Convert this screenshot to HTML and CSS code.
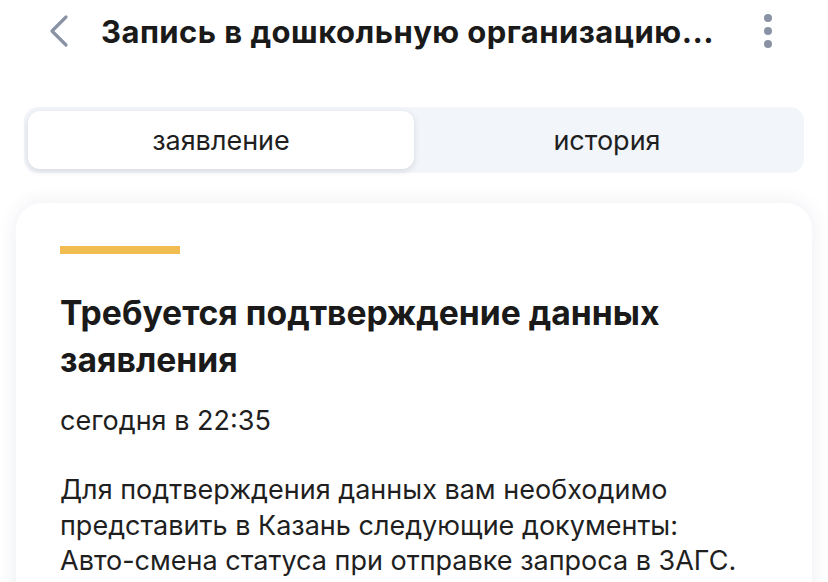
FILE: index.html
```html
<!DOCTYPE html>
<html lang="ru">
<head>
    <meta charset="UTF-8">
    <meta name="viewport" content="width=device-width, initial-scale=1.0">
    <link rel="stylesheet" href="styles.css">
    <title>Запись в дошкольную организацию</title>
</head>
<body>
    <header class="topbar">
        <button class="back" aria-label="Назад">
            <svg width="26" height="34" viewBox="0 0 26 34"><path d="M20 3 L6 17 L20 31" fill="none" stroke="#8a93a6" stroke-width="3.2" stroke-linecap="round" stroke-linejoin="round"/></svg>
        </button>
        <h1 class="title">Запись в дошкольную организацию...</h1>
        <button class="more" aria-label="Меню">
            <span></span><span></span><span></span>
        </button>
    </header>

    <div class="tabs">
        <div class="tab active">заявление</div>
        <div class="tab">история</div>
    </div>

    <section class="card">
        <div class="mark"></div>
        <h2>Требуется подтверждение данных заявления</h2>
        <p class="date">сегодня в 22:35</p>
        <p class="text">Для подтверждения данных вам необходимо представить в Казань следующие документы: <span class="nowrap">Авто-смена</span> статуса при отправке запроса в ЗАГС.</p>
    </section>
</body>
</html>
```

FILE: styles.css
```css
* {
    margin: 0;
    padding: 0;
    box-sizing: border-box;
}
body {
    background: #ffffff;
    font-family: Inter, Roboto, "Liberation Sans", sans-serif;
    color: #1f1f1f;
    overflow: hidden;
}
.topbar {
    display: flex;
    align-items: center;
    height: 62px;
    padding: 0 48px 0 46px;
}
.back, .more {
    background: none;
    border: 0;
    display: flex;
}
.title {
    flex: 1;
    margin-left: 29px;
    font-size: 31px;
    letter-spacing: 0.45px;
    font-weight: 700;
    color: #1a1a1a;
    white-space: nowrap;
}
.more {
    flex-direction: column;
    gap: 5px;
    padding: 0 8px;
}
.more span {
    width: 8px;
    height: 8px;
    border-radius: 50%;
    background: #8a93a6;
}
.tabs {
    display: flex;
    margin: 45px 24px 0;
    padding: 4px;
    height: 66px;
    background: #f2f5f9;
    border-radius: 14px;
}
.tab {
    flex: 1;
    display: flex;
    align-items: center;
    justify-content: center;
    font-size: 27px;
    color: #1f1f1f;
    border-radius: 12px;
}
.tab.active {
    background: #fff;
    box-shadow: 0 2px 6px rgba(40, 50, 80, 0.14);
}
.card {
    margin: 30px 16px 0;
    padding: 43px 44px 40px;
    background: #fff;
    border-radius: 26px;
    box-shadow: 0 0 20px rgba(40, 60, 110, 0.09);
}
.mark {
    width: 120px;
    height: 8px;
    background: #f2bd50;
}
.card h2 {
    margin-top: 35px;
    font-size: 33.7px;
    font-weight: 700;
    line-height: 47px;
    color: #1a1a1a;
}
.date {
    margin-top: 21px;
    font-size: 27px;
    line-height: 34px;
}
.text {
    margin-top: 34px;
    font-size: 27px;
    line-height: 35.5px;
}
.nowrap {
    white-space: nowrap;
}
```
